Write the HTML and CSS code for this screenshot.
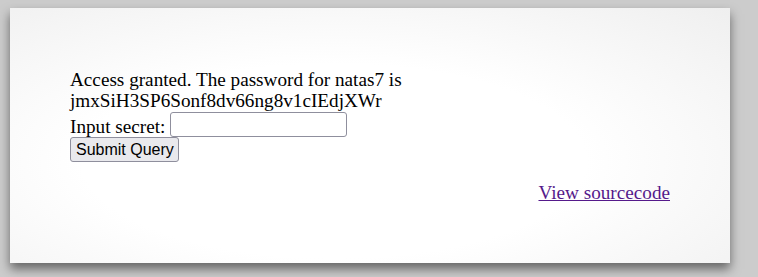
FILE: index.html
```html
<!DOCTYPE html>
<html lang="en">
<head>
    <meta charset="UTF-8">
    <title>natas6</title>
    <link rel="stylesheet" href="styles.css">
</head>
<body>
    <div id="content">
        Access granted. The password for natas7 is<br>
        jmxSiH3SP6Sonf8dv66ng8v1cIEdjXWr
        <form method="post">
            Input secret: <input name="secret" class="secret"><br>
            <input type="submit" name="submit" class="submit" value="Submit Query">
        </form>
        <div id="viewsource"><a href="index-source.html">View sourcecode</a></div>
    </div>
</body>
</html>
```

FILE: styles.css
```css
* {
    box-sizing: border-box;
}

html {
    background-color: #ccc;
}

body {
    margin: 0;
    min-height: 277px;
    padding: 8px 0 0 10px;
    background-color: #ccc;
    font-family: "Liberation Serif", "Times New Roman", serif;
    font-size: 19.2px;
    line-height: 21px;
    color: #000;
}

#content {
    width: 720px;
    height: 255px;
    padding: 61px 60px 0 60px;
    background: radial-gradient(ellipse at 45% 60%, #fff 45%, #efefef 100%);
    box-shadow: 0 6px 10px rgba(0, 0, 0, 0.5);
}

form {
    margin: 0 0 20px 0;
}

.secret {
    width: 177px;
    height: 25px;
    margin: 1px 0 0 0;
    font-size: 15px;
    background-color: #fff;
    border: 1px solid #8f8f9d;
    border-radius: 3px;
    vertical-align: bottom;
}

.submit {
    height: 25px;
    margin: 0;
    padding: 0 4px 0 5px;
    font-family: Arial, "Liberation Sans", sans-serif;
    font-size: 16px;
    color: #000;
    background-color: #e9e9ed;
    border: 1px solid #8f8f9d;
    border-radius: 3px;
    vertical-align: top;
}

#viewsource {
    text-align: right;
}

#viewsource a {
    color: #551a8b;
}
```
